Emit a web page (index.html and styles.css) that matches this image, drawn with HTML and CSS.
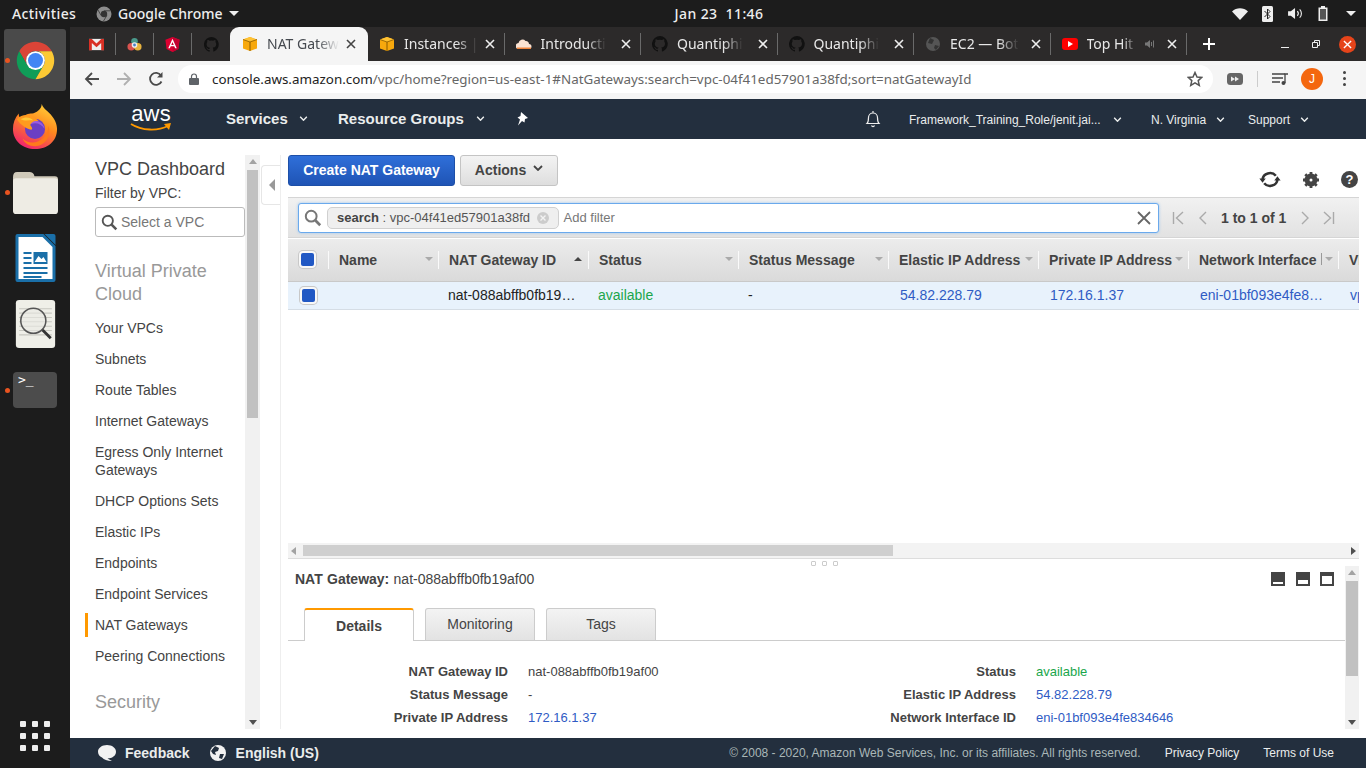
FILE: index.html
```html
<!DOCTYPE html>
<html lang="en">
<head>
  <meta charset="UTF-8" />
  <title>NAT Gateways | VPC Management Console</title>
  <link rel="stylesheet" href="styles.css">
</head>
<body>
  <svg class="defs" width="0" height="0">
    <symbol id="i-cube" viewBox="0 0 16 16">
      <path d="M8 1 15 3.500V12.500L8 15 1 12.500V3.500Z" fill="#f7a80d"/>
      <path d="M1 3.500 8 6 15 3.500 8 1Z" fill="#ffc233"/>
      <path d="M8 6V15" stroke="#8a5a00" stroke-width="1"/>
      <path d="M1 3.500 8 6 15 3.500" fill="none" stroke="#8a5a00" stroke-width=".8"/>
    </symbol>
    <symbol id="i-github" viewBox="0 0 16 16">
      <path fill="#111" d="M8 0a8 8 0 0 0-2.500 15.600c.4.100.5-.2.5-.4v-1.400c-2.200.5-2.700-1-2.700-1-.4-.9-.9-1.200-.9-1.200-.7-.5.100-.5.100-.5.800.1 1.200.8 1.200.8.700 1.200 1.900.9 2.300.7.100-.5.300-.9.500-1.100-1.800-.2-3.700-.9-3.700-4 0-.9.300-1.600.8-2.100-.1-.2-.4-1 .1-2.100 0 0 .7-.2 2.200.8a7.600 7.600 0 0 1 4 0c1.500-1 2.200-.8 2.200-.8.400 1.100.200 1.900.100 2.100.5.600.8 1.300.8 2.100 0 3.100-1.900 3.700-3.700 3.900.3.300.6.800.6 1.500v2.200c0 .2.100.5.600.4A8 8 0 0 0 8 0Z"/>
    </symbol>
    <symbol id="i-x" viewBox="0 0 10 10">
      <path d="M1 1 9 9M9 1 1 9" stroke="currentColor" stroke-width="1.600" fill="none"/>
    </symbol>
    <symbol id="i-caret" viewBox="0 0 10 6">
      <path d="M1 1 5 5 9 1" stroke="currentColor" stroke-width="1.800" fill="none"/>
    </symbol>
    <symbol id="i-search" viewBox="0 0 20 20">
      <circle cx="8" cy="8" r="6" fill="none" stroke="currentColor" stroke-width="2.200"/>
      <path d="M12.500 12.500 18 18" stroke="currentColor" stroke-width="3"/>
    </symbol>
  </svg>

  <!-- GNOME TOP BAR -->
  <header class="topbar">
    <div class="topbar-left">
      <span class="activities">Activities</span>
      <span class="app-menu">
        <svg class="app-icon" viewBox="0 0 16 16"><circle cx="8" cy="8" r="7.500" fill="#8d8d8d"/><circle cx="8" cy="8" r="3.200" fill="#333"/><path d="M8 4.800H14.500M5.200 9.600 2 4M10.800 9.600 7.500 15" stroke="#333" stroke-width=".8"/></svg>
        Google Chrome
        <i class="down-tri"></i>
      </span>
    </div>
    <div class="clock">Jan 23&nbsp; 11:46</div>
    <div class="tray">
      <svg class="tray-wifi" viewBox="0 0 16 12"><path d="M0 3.500C4.500-.8 11.500-.8 16 3.500L8 12Z" fill="#eee"/></svg>
      <svg class="tray-bt" viewBox="0 0 11 16"><rect width="11" height="16" rx="1.500" fill="#eee"/><path d="M2.500 5 8 10.500 5.500 13V3L8 5.500 2.500 11" fill="none" stroke="#222" stroke-width="1"/></svg>
      <svg class="tray-vol" viewBox="0 0 16 14"><path d="M0 4.500H3L7.500 1V13L3 9.500H0Z" fill="#eee"/><path d="M10 4.500C11.300 6 11.300 8 10 9.500M12.500 2.500C15 5 15 9 12.500 11.500" stroke="#eee" fill="none" stroke-width="1.200"/></svg>
      <svg class="tray-bat" viewBox="0 0 10 15"><path d="M3 0H7V1.500H9.500V15H.5V1.500H3Z" fill="#eee"/><rect x="2" y="3" width="6" height="10.500" fill="#555"/></svg>
      <i class="down-tri"></i>
    </div>
  </header>

  <div class="desk">
    <!-- DOCK -->
    <aside class="dock">
      <div class="dock-item dock-active">
        <i class="run-dot"></i>
        <svg class="dock-icon" viewBox="0 0 48 48">
          <path d="M6.700 14A20 20 0 0 1 41.300 14H24A10 10 0 0 0 15.300 29Z" fill="#db4437"/>
          <path d="M6.700 14A20 20 0 0 0 24 44L32.700 29H15.300Z" fill="#0f9d58"/>
          <path d="M41.300 14A20 20 0 0 1 24 44L32.700 29A10 10 0 0 0 24 14Z" fill="#fcc934"/>
          <circle cx="24" cy="24" r="10" fill="#fff"/>
          <circle cx="24" cy="24" r="8" fill="#4285f4"/>
        </svg>
      </div>
      <div class="dock-item">
        <svg class="dock-icon dock-fox" viewBox="0 0 48 48">
          <defs>
            <linearGradient id="fx" x1=".8" y1="0" x2=".3" y2="1"><stop offset="0" stop-color="#ffd43a"/><stop offset=".45" stop-color="#ff8a1e"/><stop offset="1" stop-color="#f0226e"/></linearGradient>
          </defs>
          <path d="M31 1C33 7 38 8 42 14 46 19 47 24 47 27 47 40 37 48 24 48 11 48 1 39 1 27 1 21 3 16 7 11 7 14 8 16 10 17 13 12 17 11 21 11 25 10 31 7 31 1Z" fill="url(#fx)"/>
          <circle cx="24" cy="27" r="10.500" fill="#6b3fc4"/>
          <path d="M20 19C26 17 33 20 34 27 31 22 25 20 20 22Z" fill="#9a5ce0"/>
          <path d="M5 17C12 10 21 12 28 19 23 18 20 20 19 23 21 26 22 27 20 28 15 27 9 23 5 17Z" fill="#ff9a1f"/>
          <path d="M9 17C14 14 19 15 22 18 17 18 13 19 9 17Z" fill="#ffc93a"/>
          <path d="M11 37C20 46 37 40 38 24 42 35 34 45 24 45 18 45 13 42 11 37Z" fill="#ff7a1c"/>
        </svg>
      </div>
      <div class="dock-item">
        <i class="run-dot"></i>
        <svg class="dock-icon" viewBox="0 0 44 42">
          <path d="M0 6Q0 1 4 1H16Q20 1 21 5H41Q44 5 44 8V12H0Z" fill="#cfc9b9"/>
          <rect y="7" width="44" height="35" rx="3" fill="#eeece4"/>
        </svg>
      </div>
      <div class="dock-item">
        <svg class="dock-icon dock-doc" viewBox="0 0 40 48">
          <path d="M0 2Q0 0 2 0H28L40 12V46Q40 48 38 48H2Q0 48 0 46Z" fill="#1a6fa8"/>
          <path d="M3 3H27L37 13V45H3Z" fill="#fff"/>
          <path d="M29 0H38Q40 0 40 2V11Z" fill="#1a6fa8"/>
          <path d="M8 18H16V20H8ZM8 23H16V25H8ZM8 28H16V30H8ZM8 33H32V35H8ZM8 38H32V40H8ZM8 42H26V44H8Z" fill="#1a6fa8"/>
          <rect x="18" y="18" width="14" height="12" fill="#1a6fa8"/>
          <path d="M19 28 23 22 26 25 28 23 31 28Z" fill="#fff"/>
        </svg>
      </div>
      <div class="dock-item">
        <svg class="dock-icon dock-doc" viewBox="0 0 36 44">
          <rect width="36" height="44" rx="3" fill="#efefe8"/>
          <path d="M3 8H33M3 12H33M3 16H33M3 20H33M3 24H33M3 28H33M3 32H33" stroke="#c8c8c0" stroke-width="1"/>
          <circle cx="16" cy="19" r="11.500" fill="#e9e9e4" fill-opacity=".6" stroke="#555" stroke-width="1.400"/>
          <path d="M24.500 27.500 32 35" stroke="#333" stroke-width="2.600"/>
        </svg>
      </div>
      <div class="dock-item">
        <i class="run-dot"></i>
        <div class="term-icon">&gt;_</div>
      </div>
      <div class="app-grid">
        <i></i><i></i><i></i><i></i><i></i><i></i><i></i><i></i><i></i>
      </div>
    </aside>

    <div class="browser">
      <!-- CHROME TAB STRIP -->
      <div class="tabstrip">
        <div class="pinned">
          <svg viewBox="0 0 16 12"><rect width="16" height="12" fill="#eee"/><path d="M0 0H3L8 5 13 0H16V12H13V4.500L8 9 3 4.500V12H0Z" fill="#d93025"/></svg>
        </div>
        <div class="pinned">
          <svg viewBox="0 0 16 16"><circle cx="8" cy="4.500" r="3.500" fill="#4a9a8c"/><circle cx="4.500" cy="10.500" r="4" fill="#d9534f"/><circle cx="11.500" cy="10.500" r="4" fill="#e8b33f"/><circle cx="8" cy="8.500" r="3" fill="#eee"/><circle cx="8" cy="8.500" r="1.500" fill="#4a7ec4"/></svg>
        </div>
        <div class="pinned">
          <svg viewBox="0 0 16 17"><path d="M8 0 16 3 14.700 13.500 8 17 1.300 13.500 0 3Z" fill="#dd0031"/><path d="M8 0 16 3 14.700 13.500 8 17Z" fill="#c3002f"/><path d="M8 2 3.200 12.800H5L6 10.400H10L11 12.800H12.800ZM8 5.800 9.400 9H6.600Z" fill="#fff"/></svg>
        </div>
        <div class="pinned pinned-last"><svg viewBox="0 0 16 16"><use href="#i-github"/></svg></div>

        <div class="tab tab-active">
          <svg class="favicon" viewBox="0 0 16 16"><use href="#i-cube"/></svg>
          <span class="tab-title tab-title-on">NAT Gatew</span>
          <svg class="tab-x" viewBox="0 0 10 10"><use href="#i-x"/></svg>
        </div>
        <div class="tab">
          <svg class="favicon" viewBox="0 0 16 16"><use href="#i-cube"/></svg>
          <span class="tab-title">Instances |</span>
          <svg class="tab-x" viewBox="0 0 10 10"><use href="#i-x"/></svg>
        </div>
        <div class="tab">
          <svg class="favicon" viewBox="0 0 16 10"><path d="M3 10A3 3 0 0 1 2.500 4 4 4 0 0 1 9.500 2 3 3 0 0 1 13 5 2.500 2.500 0 0 1 13 10Z" fill="#fbe3d3"/><path d="M1 8.500H15V10H1Z" fill="#f0843c"/></svg>
          <span class="tab-title">Introducti</span>
          <svg class="tab-x" viewBox="0 0 10 10"><use href="#i-x"/></svg>
        </div>
        <div class="tab">
          <svg class="favicon" viewBox="0 0 16 16"><use href="#i-github"/></svg>
          <span class="tab-title">Quantiphi</span>
          <svg class="tab-x" viewBox="0 0 10 10"><use href="#i-x"/></svg>
        </div>
        <div class="tab">
          <svg class="favicon" viewBox="0 0 16 16"><use href="#i-github"/></svg>
          <span class="tab-title">Quantiphi</span>
          <svg class="tab-x" viewBox="0 0 10 10"><use href="#i-x"/></svg>
        </div>
        <div class="tab">
          <svg class="favicon" viewBox="0 0 16 16"><circle cx="8" cy="8" r="7" fill="#555"/><path d="M5 2 9 4 7 8 3 7ZM10 9 14 10 11 14 9 12Z" fill="#333"/></svg>
          <span class="tab-title">EC2 — Bot</span>
          <svg class="tab-x" viewBox="0 0 10 10"><use href="#i-x"/></svg>
        </div>
        <div class="tab">
          <svg class="favicon" viewBox="0 0 16 12"><rect width="16" height="12" rx="3" fill="#f00"/><path d="M6 3 11 6 6 9Z" fill="#fff"/></svg>
          <span class="tab-title tab-title-short">Top Hit</span>
          <svg class="tab-audio" viewBox="0 0 10 10"><path d="M0 3.500H2L5 1V9L2 6.500H0Z" fill="#777"/><path d="M6.500 3V7M8.500 1.500V8.500" stroke="#777" stroke-width="1"/></svg>
          <svg class="tab-x" viewBox="0 0 10 10"><use href="#i-x"/></svg>
        </div>
        <svg class="new-tab" viewBox="0 0 12 12"><path d="M6 0V12M0 6H12" stroke="#fff" stroke-width="2"/></svg>
        <div class="win-btns">
          <svg viewBox="0 0 8 8"><path d="M0 7.500H8" stroke="#eee" stroke-width="1"/></svg>
          <svg viewBox="0 0 8 8"><path d="M.5 2.500H5.500V7.500H.5ZM2.500 2.500V.5H7.500V5.500H5.500" stroke="#eee" fill="none" stroke-width="1"/></svg>
          <span class="win-close"><svg viewBox="0 0 10 10"><path d="M1 1 9 9M9 1 1 9" stroke="#fff" stroke-width="1.500"/></svg></span>
        </div>
      </div>

      <!-- CHROME TOOLBAR -->
      <div class="toolbar">
        <svg class="tool-btn" viewBox="0 0 16 16"><path d="M15 8H2M8 2 2 8 8 14" stroke="#4a4a4a" stroke-width="1.800" fill="none"/></svg>
        <svg class="tool-btn" viewBox="0 0 16 16"><path d="M1 8H14M8 2 14 8 8 14" stroke="#b0b0b0" stroke-width="1.800" fill="none"/></svg>
        <svg class="tool-btn" viewBox="0 0 16 16"><path d="M13.500 10.500A6 6 0 1 1 13 4.500" stroke="#4a4a4a" stroke-width="1.800" fill="none"/><path d="M14.500 1V6.500H9Z" fill="#4a4a4a"/></svg>
        <div class="omnibox">
          <svg class="lock" viewBox="0 0 10 12"><path d="M2.500 5V3.500A2.500 2.500 0 0 1 7.500 3.500V5" stroke="#5f6368" fill="none" stroke-width="1.200"/><rect y="5" width="10" height="7" rx="1" fill="#5f6368"/></svg>
          <span class="url">console.aws.amazon.com<span class="url-path">/vpc/home?region=us-east-1#NatGateways:search=vpc-04f41ed57901a38fd;sort=natGatewayId</span></span>
          <svg class="star" viewBox="0 0 16 16"><path d="M8 1.500 10 6 14.800 6.400 11.200 9.600 12.300 14.400 8 11.900 3.700 14.400 4.800 9.600 1.200 6.400 6 6Z" fill="none" stroke="#555" stroke-width="1.500"/></svg>
        </div>
        <svg class="ext-ff" viewBox="0 0 16 12"><rect width="16" height="12" rx="3.500" fill="#666"/><path d="M4 3.500 8 6 4 8.500ZM8 3.500 12 6 8 8.500Z" fill="#eee"/></svg>
        <i class="tool-sep"></i>
        <svg class="ext-queue" viewBox="0 0 16 12"><path d="M0 1H13M0 5H11M0 9H8" stroke="#444" stroke-width="1.500"/><circle cx="11.500" cy="10" r="2" fill="#444"/><path d="M13 10V1H16" stroke="#444" stroke-width="1.300" fill="none"/></svg>
        <span class="avatar">J</span>
        <span class="kebab"><i></i><i></i><i></i></span>
      </div>

      <!-- AWS NAV -->
      <nav class="awsnav">
        <div class="aws-logo">
          <span class="aws-word">aws</span>
          <svg viewBox="0 0 42 10"><path d="M1 2C12 9 28 9 38 4" stroke="#f90" stroke-width="1.800" fill="none"/><path d="M34 2 41 1 39 8Z" fill="#f90"/></svg>
        </div>
        <a class="nav-main nav-services">Services <svg class="caret" viewBox="0 0 10 6"><use href="#i-caret"/></svg></a>
        <a class="nav-main nav-groups">Resource Groups <svg class="caret" viewBox="0 0 10 6"><use href="#i-caret"/></svg></a>
        <svg class="pin" viewBox="0 0 14 14"><path d="M6 0 13 6 10 7 9.500 10.500 7 9 3 13.500 5 7.500 2.500 5.500 5.500 4Z" fill="#fff"/></svg>
        <svg class="bell" viewBox="0 0 16 18"><path d="M2 13.500C3.500 12 3.500 10 3.500 7.500A4.500 4.500 0 0 1 12.500 7.500C12.500 10 12.500 12 14 13.500Z M6.500 15.500A1.600 1.600 0 0 0 9.500 15.500M8 1V3" fill="none" stroke="#eee" stroke-width="1.200"/></svg>
        <a class="nav-right nav-user">Framework_Training_Role/jenit.jai... <svg class="caret" viewBox="0 0 10 6"><use href="#i-caret"/></svg></a>
        <a class="nav-right nav-region">N. Virginia <svg class="caret" viewBox="0 0 10 6"><use href="#i-caret"/></svg></a>
        <a class="nav-right">Support <svg class="caret" viewBox="0 0 10 6"><use href="#i-caret"/></svg></a>
      </nav>

      <!-- CONSOLE -->
      <div class="console">
        <div class="side">
          <div class="sidenav">
            <h3 class="side-title">VPC Dashboard</h3>
            <label class="side-filter">Filter by VPC:</label>
            <div class="vpc-select">
              <svg viewBox="0 0 20 20"><use href="#i-search"/></svg>
              <span>Select a VPC</span>
            </div>
            <h4 class="side-group">Virtual Private Cloud</h4>
            <ul class="side-list">
              <li>Your VPCs</li>
              <li>Subnets</li>
              <li>Route Tables</li>
              <li>Internet Gateways</li>
              <li>Egress Only Internet Gateways</li>
              <li>DHCP Options Sets</li>
              <li>Elastic IPs</li>
              <li>Endpoints</li>
              <li>Endpoint Services</li>
              <li class="current">NAT Gateways</li>
              <li>Peering Connections</li>
            </ul>
            <h4 class="side-group side-security">Security</h4>
          </div>
          <div class="vscroll side-scroll">
            <i class="arr-up"></i>
            <div class="thumb side-thumb"></div>
            <i class="arr-down"></i>
          </div>
          <div class="collapse"><i></i></div>
        </div>

        <main class="main">
          <div class="actions">
            <button class="btn btn-primary">Create NAT Gateway</button>
            <button class="btn btn-plain">Actions <svg class="actions-caret" viewBox="0 0 10 6"><use href="#i-caret"/></svg></button>
            <div class="page-tools">
              <svg class="tool-refresh" viewBox="0 0 20 16"><path d="M3 8A7 6.500 0 0 1 15.500 4.500M17 8A7 6.500 0 0 1 4.500 11.500" fill="none" stroke="#333" stroke-width="2.400"/><path d="M0 7H6L3 11ZM14 9H20L17 5Z" fill="#333"/></svg>
              <svg class="tool-gear" viewBox="0 0 16 16"><circle cx="8" cy="8" r="4" fill="none" stroke="#444" stroke-width="5"/><path d="M8 0V3M8 13V16M0 8H3M13 8H16M2.300 2.300 4.400 4.400M11.600 11.600 13.700 13.700M13.700 2.300 11.600 4.400M4.400 11.600 2.300 13.700" stroke="#444" stroke-width="2.800"/></svg>
              <span class="tool-help">?</span>
            </div>
          </div>

          <div class="filterbar">
            <div class="searchbox">
              <svg class="search-ico" viewBox="0 0 20 20"><use href="#i-search"/></svg>
              <span class="chip"><b>search</b> : vpc-04f41ed57901a38fd <svg class="chip-x" viewBox="0 0 12 12"><circle cx="6" cy="6" r="6" fill="#ccc"/><path d="M3.500 3.500 8.500 8.500M8.500 3.500 3.500 8.500" stroke="#f3f3f3" stroke-width="1.400"/></svg></span>
              <span class="add-filter">Add filter</span>
              <svg class="search-x" viewBox="0 0 14 14"><path d="M1 1 13 13M13 1 1 13" stroke="#666" stroke-width="1.800"/></svg>
            </div>
            <div class="pager">
              <svg viewBox="0 0 12 14"><path d="M1.500 1V13M11 1 4.500 7 11 13" stroke="#aaa" stroke-width="1.400" fill="none"/></svg>
              <svg viewBox="0 0 12 14"><path d="M9 1 3 7 9 13" stroke="#aaa" stroke-width="1.400" fill="none"/></svg>
              <span class="pager-text">1 to 1 of 1</span>
              <svg viewBox="0 0 12 14"><path d="M3 1 9 7 3 13" stroke="#aaa" stroke-width="1.400" fill="none"/></svg>
              <svg viewBox="0 0 12 14"><path d="M10.500 1V13M1 1 7.500 7 1 13" stroke="#aaa" stroke-width="1.400" fill="none"/></svg>
            </div>
          </div>

          <div class="grid-wrap">
            <div class="grid-row grid-head">
              <div class="cell cell-check"><i class="check"></i></div>
              <div class="cell cell-name">Name<i class="sort"></i></div>
              <div class="cell">NAT Gateway ID<i class="sort sort-up"></i></div>
              <div class="cell">Status<i class="sort"></i></div>
              <div class="cell">Status Message<i class="sort"></i></div>
              <div class="cell">Elastic IP Address<i class="sort"></i></div>
              <div class="cell">Private IP Address<i class="sort"></i></div>
              <div class="cell">Network Interface<i class="sort-bar"></i><i class="sort"></i></div>
              <div class="cell">VPC</div>
            </div>
            <div class="grid-row grid-body">
              <div class="cell cell-check"><i class="check"></i></div>
              <div class="cell cell-name"></div>
              <div class="cell"><span class="trunc">nat-088abffb0fb19…</span></div>
              <div class="cell ok">available</div>
              <div class="cell">-</div>
              <div class="cell link">54.82.228.79</div>
              <div class="cell link">172.16.1.37</div>
              <div class="cell link"><span class="trunc">eni-01bf093e4fe8…</span></div>
              <div class="cell link">vpc-04f41ed57901a38fd</div>
            </div>
          </div>

          <div class="hscroll">
            <i class="arr-left"></i>
            <div class="thumb h-thumb"></div>
            <i class="arr-right"></i>
          </div>

          <section class="detail">
            <div class="grip"><i></i><i></i><i></i></div>
            <div class="detail-main">
              <div class="detail-head">
                <span class="detail-name"><b>NAT Gateway:</b> nat-088abffb0fb19af00</span>
                <div class="pane-btns">
                  <i class="pane pane-a"></i><i class="pane pane-b"></i><i class="pane pane-c"></i>
                </div>
              </div>
              <div class="tabs">
                <span class="dtab dtab-on">Details</span>
                <span class="dtab">Monitoring</span>
                <span class="dtab">Tags</span>
              </div>
              <div class="props">
                <div class="prop-label">NAT Gateway ID</div><div class="prop-val">nat-088abffb0fb19af00</div>
                <div class="prop-label">Status</div><div class="prop-val ok">available</div>
                <div class="prop-label">Status Message</div><div class="prop-val">-</div>
                <div class="prop-label">Elastic IP Address</div><div class="prop-val link">54.82.228.79</div>
                <div class="prop-label">Private IP Address</div><div class="prop-val link">172.16.1.37</div>
                <div class="prop-label">Network Interface ID</div><div class="prop-val link">eni-01bf093e4fe834646</div>
              </div>
            </div>
            <div class="vscroll detail-scroll">
              <i class="arr-up"></i>
              <div class="thumb detail-thumb"></div>
              <i class="arr-down"></i>
            </div>
          </section>
        </main>
      </div>

      <!-- AWS FOOTER -->
      <footer class="footer">
        <svg class="foot-ico" viewBox="0 0 18 16"><path d="M9 0C14 0 18 2.800 18 6.800 18 10.800 14 13.500 9.500 13.500L14 16C9 16 6 14.500 4 12.500 1.500 11.500 0 9.300 0 6.800 0 2.800 4 0 9 0Z" fill="#f2f2f2"/></svg>
        <b class="foot-feedback">Feedback</b>
        <svg class="foot-ico foot-globe" viewBox="0 0 16 16"><circle cx="8" cy="8" r="8" fill="#f2f2f2"/><path d="M5 1 9 3 8 6 5 7 6 10 3 9 1 6ZM10 9 14 9 12 14 9 13Z" fill="#232f3e"/></svg>
        <b>English (US)</b>
        <span class="foot-copy">© 2008 - 2020, Amazon Web Services, Inc. or its affiliates. All rights reserved.</span>
        <a class="foot-link">Privacy Policy</a>
        <a class="foot-link">Terms of Use</a>
      </footer>
    </div>
  </div>
</body>
</html>
```

FILE: styles.css
```css
/* BASE */
html, body { margin: 0; height: 100%; overflow: hidden; }
body {
  width: 1366px;
  height: 768px;
  font-family: 'Liberation Sans', Arial, sans-serif;
  color: #444;
  background: #fff;
}
.defs { position: absolute; }
svg { display: block; flex: none; }
ul { list-style: none; margin: 0; padding: 0; }

/* GNOME TOP BAR */
.topbar {
  height: 27px;
  background: #1c1c1c;
  color: #eee;
  display: flex;
  align-items: center;
  font-family: 'Noto Sans', sans-serif;
  font-size: 14px;
  font-weight: 500;
}
.topbar-left { flex: 1; display: flex; align-items: center; padding-left: 12px; }
.activities { width: 84px; letter-spacing: .4px; }
.app-menu { display: flex; align-items: center; gap: 6px; }
.app-icon { width: 16px; height: 16px; }
.down-tri {
  width: 0; height: 0;
  border: 5px solid transparent;
  border-top: 5px solid #eee;
  border-bottom: 0;
}
.clock { width: 300px; text-align: center; margin-left: 70px; letter-spacing: .4px; }
.tray { flex: 1; display: flex; align-items: center; justify-content: flex-end; padding-right: 10px; }
.tray-wifi { width: 16px; height: 12px; margin-right: 14px; }
.tray-bt { width: 11px; height: 16px; margin-right: 15px; }
.tray-vol { width: 15px; height: 13px; margin-right: 15px; }
.tray-bat { width: 10px; height: 15px; margin-right: 18px; }

.desk { display: flex; height: 741px; }

/* DOCK */
.dock {
  width: 70px;
  background: #1c1c1c;
  display: flex;
  flex-direction: column;
  align-items: center;
  padding: 2px 0 0;
  box-sizing: border-box;
}
.dock-item {
  width: 62px;
  height: 62px;
  margin-bottom: 4px;
  display: flex;
  align-items: center;
  justify-content: center;
  border-radius: 3px;
  position: relative;
}
.dock-active { background: #4a4a4a; }
.run-dot {
  position: absolute;
  left: 1px; top: 29px;
  width: 5px; height: 5px;
  border-radius: 50%;
  background: #e95420;
}
.dock-icon { width: 45px; height: 45px; }
.dock-doc { height: 48px; }
.dock-fox { width: 46px; height: 46px; }
.term-icon {
  width: 44px;
  height: 36px;
  background: #4c4c4c;
  border-radius: 4px;
  color: #fff;
  font-family: 'DejaVu Sans Mono', monospace;
  font-size: 13px;
  line-height: 14px;
  padding: 1px 0 0 5px;
  box-sizing: border-box;
}
.app-grid {
  margin-top: auto;
  margin-bottom: 17px;
  display: grid;
  grid-template-columns: repeat(3, 6px);
  gap: 6px;
}
.app-grid i { width: 6px; height: 6px; border-radius: 1px; background: #eee; }

.browser { width: 1296px; display: flex; flex-direction: column; }

/* CHROME TAB STRIP */
.tabstrip {
  height: 34px;
  background: #2c2a2a;
  display: flex;
  align-items: center;
  font-family: 'Noto Sans', sans-serif;
  font-size: 14px;
  color: #e8e8e8;
  padding-left: 8px;
}
.pinned {
  width: 38px;
  height: 22px;
  box-sizing: border-box;
  display: flex;
  align-items: center;
  justify-content: center;
  border-right: 1px solid #6a6a6a;
}
.pinned svg { width: 15px; height: 15px; }
.pinned-last { border-right: 0; width: 38px; }
.tab {
  width: 136.500px;
  height: 22px;
  box-sizing: border-box;
  display: flex;
  align-items: center;
  padding-left: 11px;
  border-right: 1px solid #6a6a6a;
}
.tab-active {
  height: 34px;
  width: 138px;
  background: #f5f5f5;
  color: #45494f;
  border: 0;
  border-radius: 9px 9px 0 0;
  padding-left: 12px;
}
.favicon { width: 16px; height: 16px; margin-right: 9px; }
.tab-title {
  line-height: 20px;
  margin-top: -1px;
  white-space: nowrap;
  -webkit-mask-image: linear-gradient(90deg, #000 70%, transparent);
  mask-image: linear-gradient(90deg, #000 70%, transparent);
}
.tab-title-short { width: 50px; }
.tab-audio { width: 10px; height: 10px; margin-left: 8px; }
.tab-x { width: 10px; height: 10px; margin: 0 9px 0 auto; color: #eee; }
.tab-active .tab-x { color: #444; margin-right: 12px; }
.new-tab { width: 12px; height: 12px; margin-left: 16px; }
.win-btns { margin-left: auto; display: flex; align-items: center; gap: 23px; }
.win-btns > svg { width: 8px; height: 8px; }
.win-close {
  width: 17px; height: 17px;
  border-radius: 50%;
  background: #e6441a;
  display: flex;
  align-items: center;
  justify-content: center;
  margin-right: 10px;
  margin-left: -4px;
}
.win-close svg { width: 9px; height: 9px; }

/* CHROME TOOLBAR */
.toolbar {
  height: 38px;
  background: #f5f5f5;
  display: flex;
  align-items: center;
  padding-left: 14px;
  padding-bottom: 3px;
  box-sizing: border-box;
}
.tool-btn { width: 16px; height: 16px; margin-right: 16px; }
.omnibox {
  width: 1035px;
  height: 28px;
  margin-left: -2px;
  background: #fff;
  border-radius: 14px;
  display: flex;
  align-items: center;
  padding-left: 11px;
  box-sizing: border-box;
  font-family: 'Noto Sans', sans-serif;
  font-size: 13.400px;
  color: #222;
}
.lock { width: 10px; height: 12px; margin-right: 13px; }
.url-path { color: #666; }
.star { width: 16px; height: 16px; margin-left: auto; margin-right: 10px; }
.ext-ff { width: 16px; height: 12px; margin-left: 14px; }
.tool-sep { width: 1px; height: 16px; background: #ccc; margin: 0 14px; }
.ext-queue { width: 16px; height: 12px; }
.avatar {
  width: 22px; height: 22px;
  border-radius: 50%;
  background: #f4670f;
  color: #fff;
  font-size: 12px;
  display: flex;
  align-items: center;
  justify-content: center;
  margin-left: 13px;
}
.kebab { display: flex; flex-direction: column; gap: 3px; margin-left: 20px; }
.kebab i { width: 3px; height: 3px; border-radius: 50%; background: #444; }

/* AWS NAV */
.awsnav {
  height: 40px;
  background: #232f3e;
  display: flex;
  align-items: center;
  color: #eaeded;
  padding-bottom: 1px;
  box-sizing: border-box;
}
.aws-logo { margin-left: 60px; width: 42px; height: 27px; position: relative; color: #fff; }
.aws-word { font-size: 22px; line-height: 18px; display: block; letter-spacing: .2px; text-align: center; }
.aws-logo svg { width: 42px; height: 10px; margin-top: -1px; }
.caret { width: 9px; height: 5px; }
.nav-main {
  font-size: 15px;
  font-weight: 700;
  display: flex;
  align-items: center;
  gap: 11px;
}
.nav-services { margin-left: 54px; width: 112px; }
.nav-groups { width: 177px; gap: 12px; }
.pin { width: 14px; height: 14px; }
.bell { width: 16px; height: 18px; margin-left: 336px; margin-right: 28px; }
.nav-right { font-size: 12px; display: flex; align-items: center; gap: 10px; padding-top: 2px; }
.nav-user { width: 242px; gap: 12px; }
.nav-region { width: 97px; }

/* CONSOLE */
.console { flex: 1; display: flex; min-height: 0; }
.side { width: 210px; display: flex; padding: 16px 0 9px; box-sizing: border-box; flex: none; }
.sidenav {
  width: 175px;
  padding: 4px 0 0 25px;
  box-sizing: border-box;
  overflow: hidden;
  flex: none;
}
.side-title { margin: 0; font-size: 18px; font-weight: 400; line-height: 20px; }
.side-filter { display: block; font-size: 14px; line-height: 18px; margin-top: 5px; }
.vpc-select {
  width: 150px;
  height: 30px;
  box-sizing: border-box;
  border: 1px solid #bbb;
  border-radius: 3px;
  margin-top: 5px;
  display: flex;
  align-items: center;
  gap: 3px;
  padding-left: 5px;
  font-size: 14px;
  color: #777;
}
.vpc-select svg { width: 17px; height: 17px; color: #555; }
.side-group { margin: 23px 0 0; font-size: 18px; font-weight: 400; line-height: 23px; color: #999; }
.side-list { margin-top: 13px; }
.side-list li { font-size: 14px; line-height: 18px; padding-bottom: 13px; position: relative; }
.current::before {
  content: "";
  position: absolute;
  left: -10px; top: -3px;
  width: 3px; height: 24px;
  background: #f90;
}
.side-group.side-security { margin-top: 13px; }

.vscroll {
  width: 15px;
  background: #f1f1f1;
  flex: none;
  display: flex;
  flex-direction: column;
  align-items: center;
  box-sizing: border-box;
  position: relative;
}
.thumb { background: #c1c1c1; }
.side-thumb { width: 11px; height: 248px; margin-top: 15px; }
.arr-up, .arr-down, .arr-left, .arr-right { position: absolute; width: 0; height: 0; border: 4px solid transparent; }
.arr-up { top: 4px; border-top: 0; border-bottom: 5px solid #a3a3a3; }
.arr-down { bottom: 4px; border-bottom: 0; border-top: 5px solid #505050; }
.arr-left { left: 3px; top: 4px; border-left: 0; border-right: 5px solid #a3a3a3; }
.arr-right { right: 3px; top: 4px; border-right: 0; border-left: 5px solid #505050; }

.collapse {
  width: 20px;
  height: 40px;
  margin-top: 10px;
  box-sizing: border-box;
  border: 1px solid #e6e6e6;
  border-right: 0;
  border-radius: 4px 0 0 4px;
  margin-left: 1px;
  margin-right: -1px;
  display: flex;
  align-items: center;
  padding-left: 7px;
}
.collapse i {
  width: 0; height: 0;
  border: 6px solid transparent;
  border-left: 0;
  border-right: 6px solid #999;
}

.main {
  width: 1071px;
  flex: none;
  margin: 0 7px 0 8px;
  padding-top: 16px;
  box-sizing: border-box;
  display: flex;
  flex-direction: column;
  position: relative;
}
.main::before {
  content: "";
  position: absolute;
  left: -8px; top: 16px; bottom: 9px;
  width: 1px;
  background: #eee;
}

/* ACTION BAR */
.actions { height: 31px; margin-bottom: 11px; display: flex; gap: 5px; flex: none; }
.btn {
  height: 31px;
  box-sizing: border-box;
  border-radius: 3px;
  font: 700 14px 'Liberation Sans', Arial, sans-serif;
  padding: 0 0 2px;
}
.btn-primary {
  width: 167px;
  color: #fff;
  background: linear-gradient(#2f6fd9, #1f54b5);
  border: 1px solid #1d4fa8;
}
.btn-plain {
  width: 98px;
  color: #444;
  background: linear-gradient(#f3f3f3, #dedede);
  border: 1px solid #c4c4c4;
  display: flex;
  align-items: center;
  justify-content: center;
  gap: 7px;
}
.actions-caret { width: 10px; height: 6px; color: #444; margin-top: -3px; }
.page-tools { margin-left: auto; display: flex; align-items: center; gap: 22px; padding: 18px 1px 0 0; height: 13px; }
.tool-refresh { width: 22px; height: 17px; }
.tool-gear { width: 16px; height: 16px; }
.tool-help {
  width: 17px; height: 17px;
  border-radius: 50%;
  background: #444;
  color: #fff;
  font-size: 13px;
  font-weight: 700;
  line-height: 17px;
  text-align: center;
}

/* FILTER BAR */
.filterbar {
  height: 41px;
  flex: none;
  background: linear-gradient(#f1f1f1, #e2e2e2);
  border-top: 1px solid #d5d5d5;
  border-bottom: 1px solid #d5d5d5;
  box-sizing: border-box;
  display: flex;
  align-items: center;
  padding-left: 10px;
}
.searchbox {
  width: 861px;
  height: 30px;
  box-sizing: border-box;
  background: #fff;
  border: 1px solid #6aa9ec;
  border-radius: 3px;
  box-shadow: 0 0 3px #9cc7f0;
  display: flex;
  align-items: center;
  font-size: 13px;
  padding-left: 5px;
}
.search-ico { width: 18px; height: 18px; color: #777; margin-right: 5px; }
.chip {
  height: 22px;
  box-sizing: border-box;
  background: #efefef;
  border: 1px solid #d0d0d0;
  border-radius: 5px;
  padding: 0 9px;
  display: flex;
  align-items: center;
  white-space: pre;
  color: #555;
}
.chip b { color: #444; }
.chip-x { width: 12px; height: 12px; margin-left: 3px; }
.add-filter { margin-left: 5px; color: #777; }
.search-x { width: 14px; height: 14px; margin-left: auto; margin-right: 7px; }
.pager { display: flex; align-items: center; font-size: 14px; margin-left: 13px; gap: 12.500px; }
.pager svg { width: 12px; height: 14px; }
.pager-text { font-weight: 700; white-space: nowrap; }

/* DATA GRID */
.grid-wrap { overflow: hidden; flex: none; margin-top: 1px; }
.grid-row { display: flex; width: 1071px; font-size: 14px; box-sizing: border-box; }
.grid-head {
  height: 43px;
  padding-bottom: 1px;
  background: linear-gradient(#ececec, #dadada);
  font-weight: 700;
  border-bottom: 1px solid #c9c9c9;
}
.grid-body {
  height: 28px;
  padding-bottom: 1px;
  background: #e8f2fc;
  color: #222;
  border-bottom: 1px solid #d5dde5;
}
.cell {
  width: 150px;
  flex: none;
  box-sizing: border-box;
  display: flex;
  align-items: center;
  padding-left: 10px;
  white-space: nowrap;
  position: relative;
}
.grid-body .link { padding-left: 12px; }
.grid-head .cell { padding-left: 11px; }
.grid-head .cell::before {
  content: "";
  position: absolute;
  left: 0; top: 12px;
  width: 1px; height: 18px;
  background: #fafafa;
}
.grid-head .cell:first-child::before { display: none; }
.grid-row .cell-check { width: 40px; padding-left: 0; justify-content: center; }
.grid-head .check { margin-left: -2px; }
.cell-name { width: 110px; }
.sort {
  position: absolute;
  right: 5px; top: 18px;
  width: 0; height: 0;
  border: 4px solid transparent;
  border-bottom: 0;
  border-top: 4px solid #aaa;
}
.sort-up { border-top: 0; border-bottom: 4px solid #444; right: 6px; }
.sort-bar {
  position: absolute;
  right: 16px; top: 14px;
  width: 1px; height: 12px;
  background: #999;
}
.check {
  width: 13px; height: 13px;
  background: #2158c4;
  border-radius: 2px;
  box-shadow: 0 0 0 2px #f8f8f8, 0 0 0 3px #c8c8c8;
}
.ok { color: #1aa64b; }
.link { color: #2f5bc4; }

.hscroll {
  margin-top: auto;
  flex: none;
  height: 16px;
  background: #f3f3f3;
  position: relative;
  display: flex;
  align-items: center;
  padding-left: 15px;
  border-bottom: 1px solid #ddd;
  box-sizing: border-box;
}
.h-thumb { width: 590px; height: 11px; background: #cfcfcf; }

/* DETAIL PANE */
.detail { height: 179px; flex: none; display: flex; position: relative; }
.grip { position: absolute; left: 523px; top: 2px; display: flex; gap: 6px; }
.grip i { width: 3px; height: 3px; border: 1px solid #ccc; border-radius: 1px; }
.detail-main { width: 1057px; flex: none; }
.detail-head {
  height: 39px;
  display: flex;
  align-items: center;
  justify-content: space-between;
  padding: 0 11px 0 7px;
  font-size: 14px;
}
.detail-name { word-spacing: .4px; }
.pane-btns { display: flex; gap: 10.500px; }
.pane { width: 14px; height: 14px; background: #444; position: relative; }
.pane::after { content: ""; position: absolute; left: 2px; right: 2px; background: #fff; }
.pane-a::after { bottom: 2px; height: 2px; }
.pane-b::after { bottom: 2px; height: 4px; }
.pane-c::after { bottom: 2px; top: 4px; }
.tabs {
  display: flex;
  gap: 11px;
  height: 32px;
  padding: 10px 0 0 16px;
  border-bottom: 1px solid #ccc;
  font-size: 14px;
}
.dtab {
  width: 110px;
  height: 32px;
  box-sizing: border-box;
  border: 1px solid #ccc;
  border-bottom: 0;
  border-radius: 3px 3px 0 0;
  background: linear-gradient(#f3f3f3, #e3e3e3);
  display: flex;
  align-items: center;
  justify-content: center;
  padding-bottom: 2px;
}
.dtab-on {
  height: 33px;
  background: #fff;
  border-top: 2px solid #f90;
  font-weight: 700;
  padding-bottom: 0;
}
.props {
  display: grid;
  grid-template-columns: 220px 320px 188px 1fr;
  grid-auto-rows: 23px;
  margin-top: 19px;
  font-size: 13px;
  align-items: center;
}
.prop-label { text-align: right; font-weight: 700; }
.prop-val { padding-left: 20px; }
.detail-scroll { width: 14px; margin: 7px 0 9px; }
.detail-thumb { width: 12px; height: 95px; margin-top: 15px; }

/* AWS FOOTER */
.footer {
  height: 30px;
  flex: none;
  background: #232f3e;
  color: #eaeded;
  font-size: 14px;
  display: flex;
  align-items: center;
  padding-left: 28px;
}
.foot-ico { width: 18px; height: 16px; margin-right: 9px; }
.foot-feedback { margin-right: 20px; }
.foot-globe { width: 16px; margin-right: 10px; }
.foot-copy { font-size: 12px; color: #aab7b8; margin-left: auto; margin-right: 24px; }
.foot-link { font-size: 12px; margin-right: 24px; }
.foot-link:last-child { margin-right: 32px; }
```
